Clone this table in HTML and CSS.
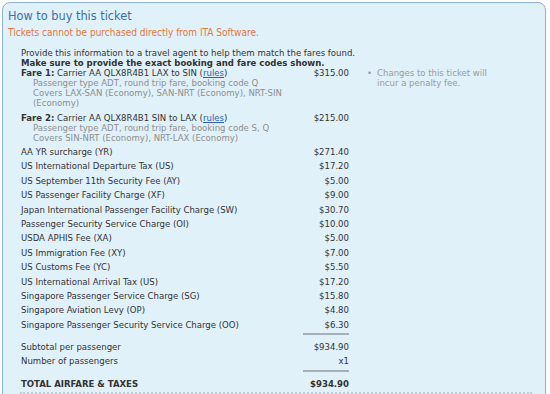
FILE: index.html
```html
<!DOCTYPE html>
<html>
<head>
<meta charset="utf-8">
<link rel="stylesheet" href="styles.css">
</head>
<body>
<div class="box">
  <h1 class="title">How to buy this ticket</h1>
  <p class="warn">Tickets cannot be purchased directly from ITA Software.</p>
  <div class="content">
    <div class="main">
      <p class="intro">Provide this information to a travel agent to help them match the fares found.</p>
      <p class="intro strong">Make sure to provide the exact booking and fare codes shown.</p>
      <div class="fare">
        <div class="fare-label">
          <div class="fare-head"><b>Fare 1:</b> Carrier AA QLX8R4B1 LAX to SIN (<a href="#">rules</a>)</div>
          <div class="sub">Passenger type ADT, round trip fare, booking code Q</div>
          <div class="sub">Covers LAX-SAN (Economy), SAN-NRT (Economy), NRT-SIN (Economy)</div>
        </div>
        <div class="fare-amt">$315.00</div>
      </div>
      <div class="fare fare2">
        <div class="fare-label">
          <div class="fare-head"><b>Fare 2:</b> Carrier AA QLX8R4B1 SIN to LAX (<a href="#">rules</a>)</div>
          <div class="sub">Passenger type ADT, round trip fare, booking code S, Q</div>
          <div class="sub">Covers SIN-NRT (Economy), NRT-LAX (Economy)</div>
        </div>
        <div class="fare-amt">$215.00</div>
      </div>
      <div class="taxes">
        <div class="row"><span>AA YR surcharge (YR)</span><span>$271.40</span></div>
        <div class="row"><span>US International Departure Tax (US)</span><span>$17.20</span></div>
        <div class="row"><span>US September 11th Security Fee (AY)</span><span>$5.00</span></div>
        <div class="row"><span>US Passenger Facility Charge (XF)</span><span>$9.00</span></div>
        <div class="row"><span>Japan International Passenger Facility Charge (SW)</span><span>$30.70</span></div>
        <div class="row"><span>Passenger Security Service Charge (OI)</span><span>$10.00</span></div>
        <div class="row"><span>USDA APHIS Fee (XA)</span><span>$5.00</span></div>
        <div class="row"><span>US Immigration Fee (XY)</span><span>$7.00</span></div>
        <div class="row"><span>US Customs Fee (YC)</span><span>$5.50</span></div>
        <div class="row"><span>US International Arrival Tax (US)</span><span>$17.20</span></div>
        <div class="row"><span>Singapore Passenger Service Charge (SG)</span><span>$15.80</span></div>
        <div class="row"><span>Singapore Aviation Levy (OP)</span><span>$4.80</span></div>
        <div class="row"><span>Singapore Passenger Security Service Charge (OO)</span><span>$6.30</span></div>
      </div>
      <div class="sep"></div>
      <div class="totals">
        <div class="row"><span>Subtotal per passenger</span><span>$934.90</span></div>
        <div class="row"><span>Number of passengers</span><span>x1</span></div>
      </div>
      <div class="sep"></div>
      <div class="row total"><span>TOTAL AIRFARE &amp; TAXES</span><span>$934.90</span></div>
    </div>
    <div class="notes">
      <span class="bullet">•</span>
      <span class="note-text">Changes to this ticket will incur a penalty fee.</span>
    </div>
  </div>
  <div class="dotted"></div>
</div>
</body>
</html>
```
FILE: styles.css
```css
html, body {
  margin: 0;
  padding: 0;
  background: #ffffff;
}
body {
  font-family: "DejaVu Sans Condensed", "DejaVu Sans", sans-serif;
  font-stretch: condensed;
  font-size: 9.5px;
  color: #333333;
}
.box {
  margin: 2px 4px 0 2px;
  border: 1px solid #8db2d4;
  border-radius: 8px;
  background: #e0f1fa;
  padding: 5px 5px 20px 5px;
}
.title {
  margin: 0;
  font-size: 12.6px;
  font-weight: normal;
  line-height: 16px;
  color: #3a6ea8;
}
.warn {
  margin: 3px 0 0 0;
  font-size: 10px;
  line-height: 12px;
  color: #e4773f;
}
.content {
  display: flex;
  margin: 9px 0 0 13px;
}
.main {
  width: 328px;
  flex: none;
}
.intro {
  margin: 0;
  line-height: 10px;
  white-space: nowrap;
}
.strong {
  font-weight: bold;
}
.fare {
  display: grid;
  grid-template-columns: 269px 1fr;
}
.fare2 {
  margin-top: 5px;
}
.fare-head {
  line-height: 10px;
}
.fare-head a {
  color: #2a5db0;
}
.sub {
  line-height: 10px;
  padding-left: 12px;
  color: #8e8e8e;
}
.fare-amt {
  text-align: right;
  line-height: 10px;
}
.taxes {
  margin-top: 2px;
}
.row {
  display: flex;
  justify-content: space-between;
  line-height: 14.4px;
  white-space: nowrap;
}
.sep {
  margin: 1px 0 4.8px auto;
  width: 46px;
  height: 2px;
  background: #a6b0b8;
}
.totals + .sep {
  margin-top: 1.4px;
}
.total {
  font-weight: bold;
}
.notes {
  display: flex;
  margin: 20px 0 0 18px;
  line-height: 10px;
  color: #9a9a9a;
}
.bullet {
  width: 10px;
  flex: none;
}
.note-text {
  width: 120px;
}
.dotted {
  margin: 1px 8px 0 12px;
  border-top: 2px dotted #bfcbd5;
}
```
